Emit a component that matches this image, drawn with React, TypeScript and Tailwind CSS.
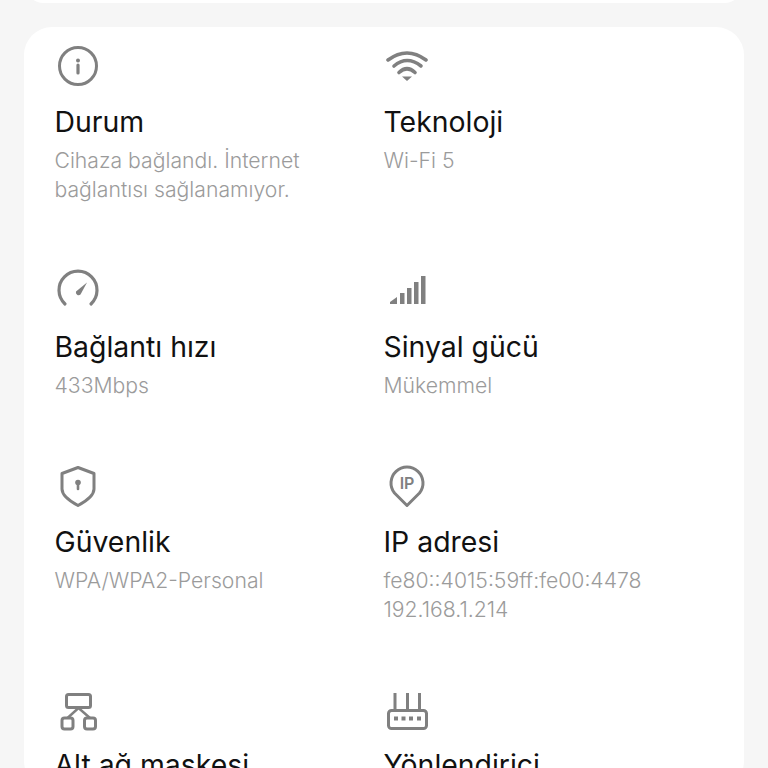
import type { ReactNode } from 'react';

const INK = '#808080';

const InfoIcon = () => (
  <svg width="44" height="44" viewBox="0 0 44 44" fill="none">
    <circle cx="23" cy="22" r="18.5" stroke={INK} strokeWidth="3" />
    <circle cx="23" cy="16.5" r="2" fill={INK} />
    <path d="M23 21v8" stroke={INK} strokeWidth="3.2" strokeLinecap="round" />
  </svg>
);

const WifiIcon = () => (
  <svg width="44" height="44" viewBox="0 0 44 44" fill="none">
    <g stroke={INK} strokeWidth="3.6" strokeLinecap="round">
      <path d="M4 16Q23 2 42 16" />
      <path d="M10 22Q23 11 37 22" />
      <path d="M15 28.5Q23 21 31 28.5" />
    </g>
    <path d="M18 32.5h10l-5 4.5z" fill={INK} />
  </svg>
);

const GaugeIcon = () => (
  <svg width="44" height="44" viewBox="0 0 44 44" fill="none">
    <path d="M10 35A19 19 0 1 1 36 35" stroke={INK} strokeWidth="3.2" strokeLinecap="round" />
    <path d="M21 22.500L32 13.500 25.500 25.500a2.800 2.800 0 0 1-4.500-3z" fill={INK} />
  </svg>
);

const SignalIcon = () => (
  <svg width="44" height="44" viewBox="0 0 44 44" fill={INK}>
    <path d="M6 35v-2l7-5V35z" />
    <rect x="16" y="24" width="4.500" height="11" />
    <rect x="23" y="19" width="4.500" height="16" />
    <rect x="30" y="13" width="4.500" height="22" />
    <rect x="37" y="7" width="4.500" height="28" />
  </svg>
);

const ShieldIcon = () => (
  <svg width="44" height="44" viewBox="0 0 44 44" fill="none">
    <path d="M23 3.500L39 9.500V25Q39 33 23 41.500Q7 33 7 25V9.500Z" stroke={INK} strokeWidth="3" strokeLinejoin="round" />
    <circle cx="23" cy="18.500" r="2.800" fill={INK} />
    <path d="M23 19v6" stroke={INK} strokeWidth="2.600" strokeLinecap="round" />
  </svg>
);

const PinIcon = () => (
  <svg width="44" height="44" viewBox="0 0 44 44" fill="none">
    <path d="M23 41.500L10.500 29A16 16 0 1 1 35.500 29Z" stroke={INK} strokeWidth="3" strokeLinejoin="round" />
    <text x="23" y="25" textAnchor="middle" fill={INK} fontSize="16" fontWeight="600" fontFamily="Inter, sans-serif">IP</text>
  </svg>
);

const SubnetIcon = () => (
  <svg width="44" height="44" viewBox="0 0 44 44" fill="none">
    <g stroke={INK} strokeWidth="3">
      <rect x="11.500" y="7.500" width="24" height="13" rx="2" />
      <rect x="7" y="31" width="11" height="11" rx="2.500" />
      <rect x="29.500" y="31" width="11" height="11" rx="2.500" />
      <path d="M23.500 21L12.500 31M23.500 21L35 31" strokeWidth="2.400" />
    </g>
  </svg>
);

const RouterIcon = () => (
  <svg width="44" height="44" viewBox="0 0 44 44" fill="none">
    <g stroke={INK} strokeWidth="3">
      <rect x="4.500" y="23.500" width="38" height="18" rx="3" />
      <path d="M11 6v17M23.500 6v17M35.500 6v17" />
    </g>
    <g fill={INK}>
      <rect x="10" y="29.500" width="4" height="4" />
      <rect x="17.500" y="29.500" width="4" height="4" />
      <rect x="25" y="29.500" width="4" height="4" />
      <rect x="33" y="29.500" width="4" height="4" />
    </g>
  </svg>
);

type InfoCellProps = {
  icon: ReactNode;
  title: string;
  lines?: string[];
};

const InfoCell = ({ icon, title, lines = [] }: InfoCellProps) => (
  <div className="flex flex-col items-start">
    <div className="h-[44px] w-[44px]">{icon}</div>
    <h3 className="mt-[16px] text-[28.4px] leading-[36px] font-normal text-[#111111] whitespace-nowrap">{title}</h3>
    <div className="mt-[5.5px] text-[21.2px] leading-[29px] font-light text-[#9b9b9b] whitespace-nowrap">
      {lines.map((line) => (
        <p key={line}>{line}</p>
      ))}
    </div>
  </div>
);

export default function App() {
  return (
    <div className="h-[768px] w-[768px] overflow-hidden bg-[#f6f6f6] font-['Inter',sans-serif]">
      <div className="mx-[24px] -mt-[37px] h-[40px] rounded-[28px] bg-white" />
      <div className="mx-[24px] mt-[24px] rounded-[28px] bg-white pt-[17px] pl-[30.5px]">
        <div className="grid grid-cols-[329px_1fr] grid-rows-[225px_195px_223px_auto]">
          <InfoCell icon={<InfoIcon />} title="Durum" lines={['Cihaza bağlandı. İnternet', 'bağlantısı sağlanamıyor.']} />
          <InfoCell icon={<WifiIcon />} title="Teknoloji" lines={['Wi-Fi 5']} />
          <InfoCell icon={<GaugeIcon />} title="Bağlantı hızı" lines={['433Mbps']} />
          <InfoCell icon={<SignalIcon />} title="Sinyal gücü" lines={['Mükemmel']} />
          <InfoCell icon={<ShieldIcon />} title="Güvenlik" lines={['WPA/WPA2-Personal']} />
          <InfoCell icon={<PinIcon />} title="IP adresi" lines={['fe80::4015:59ff:fe00:4478', '192.168.1.214']} />
          <InfoCell icon={<SubnetIcon />} title="Alt ağ maskesi" />
          <InfoCell icon={<RouterIcon />} title="Yönlendirici" />
        </div>
      </div>
    </div>
  );
}
